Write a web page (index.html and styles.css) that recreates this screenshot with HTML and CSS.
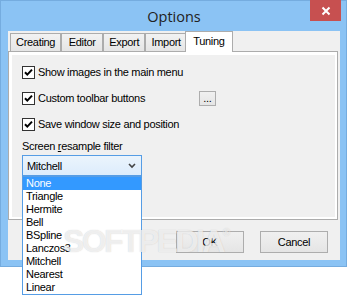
FILE: index.html
```html
<!DOCTYPE html>
<html lang="en">
<head>
  <meta charset="UTF-8" />
  <title>Options</title>
  <link rel="stylesheet" href="styles.css">
</head>
<body>

  <div class="window">
    <div class="titlebar">
      <span class="title">Options</span>
      <button class="close-button" aria-label="Close">
        <svg width="10" height="10" viewBox="0 0 10 10"><path d="M1.5 1.5 L8.5 8.5 M8.5 1.5 L1.5 8.5" stroke="#fff" stroke-width="2"/></svg>
      </button>
    </div>

    <div class="client">
      <!-- Abas -->
      <div class="tab-control">
        <div class="tab-strip">
          <span class="tab">Creating</span>
          <span class="tab">Editor</span>
          <span class="tab">Export</span>
          <span class="tab">Import</span>
          <span class="tab active">Tuning</span>
        </div>

        <div class="panel">
          <div class="page">
            <div class="check-list">
              <label class="check-row">
                <svg class="check" width="13" height="13" viewBox="0 0 13 13"><rect x="0.5" y="0.5" width="12" height="12" fill="#fff" stroke="#333"/><path d="M3 6.2 L5.3 8.6 L10 3.6" fill="none" stroke="#000" stroke-width="2"/></svg>
                <span>Show images in the main menu</span>
              </label>
              <label class="check-row">
                <svg class="check" width="13" height="13" viewBox="0 0 13 13"><rect x="0.5" y="0.5" width="12" height="12" fill="#fff" stroke="#333"/><path d="M3 6.2 L5.3 8.6 L10 3.6" fill="none" stroke="#000" stroke-width="2"/></svg>
                <span class="label-wide">Custom toolbar buttons</span>
                <button class="dots-button">...</button>
              </label>
              <label class="check-row">
                <svg class="check" width="13" height="13" viewBox="0 0 13 13"><rect x="0.5" y="0.5" width="12" height="12" fill="#fff" stroke="#333"/><path d="M3 6.2 L5.3 8.6 L10 3.6" fill="none" stroke="#000" stroke-width="2"/></svg>
                <span>Save window size and position</span>
              </label>
            </div>

            <div class="field-label">Screen <u>r</u>esample filter</div>

            <div class="combo">
              <span>Mitchell</span>
              <svg class="chevron" width="8" height="6" viewBox="0 0 8 6"><path d="M1 1 L4 4 L7 1" fill="none" stroke="#444" stroke-width="1.6"/></svg>

              <!-- Lista aberta -->
              <ul class="dropdown">
                <li class="selected">None</li>
                <li>Triangle</li>
                <li>Hermite</li>
                <li>Bell</li>
                <li>BSpline</li>
                <li>Lanczos3</li>
                <li>Mitchell</li>
                <li>Nearest</li>
                <li>Linear</li>
              </ul>
            </div>
          </div>
        </div>
      </div>

      <div class="buttons">
        <button class="dialog-button">OK</button>
        <button class="dialog-button">Cancel</button>
      </div>
    </div>

    <div class="watermark">SOFTPEDIA<sup>®</sup></div>
  </div>

</body>
</html>
```

FILE: styles.css
```css
* {
  box-sizing: border-box;
}

html,
body {
  min-height: 295px;
}

body {
  margin: 0;
  background-color: #fff;
  font-family: "Liberation Sans", Arial, sans-serif;
  font-size: 11px;
  letter-spacing: -0.3px;
  color: #000;
}

button {
  font-family: inherit;
  font-size: 11px;
  letter-spacing: -0.3px;
  color: #000;
  padding: 0;
}

.window {
  position: relative;
  width: 347px;
  height: 267px;
  background-color: #8bc3f4;
  border: 1px solid #75acdf;
  padding: 0 6px 6px 7px;
}

.titlebar {
  height: 30px;
  display: flex;
  justify-content: center;
  align-items: center;
}

.title {
  font-family: "Open Sans", sans-serif;
  font-size: 14.5px;
  letter-spacing: 0;
  color: #222;
}

.close-button {
  position: absolute;
  top: -1px;
  right: 5px;
  width: 31px;
  height: 21px;
  border: none;
  background-color: #c75050;
  display: flex;
  align-items: center;
  justify-content: center;
}

.client {
  height: 229px;
  background-color: #f0f0f0;
  display: flex;
  flex-direction: column;
}

.tab-control {
  width: 330px;
}

.tab-strip {
  display: flex;
  align-items: flex-end;
  height: 20px;
  padding-left: 2px;
  position: relative;
  z-index: 1;
}

.tab {
  height: 18px;
  min-width: 42px;
  line-height: 17px;
  padding: 0 5px;
  text-align: center;
  border: 1px solid #acacac;
  border-bottom: none;
  background: linear-gradient(#f2f2f2, #e5e5e5);
}

.tab.active {
  height: 21px;
  line-height: 18px;
  padding: 0 7px;
  margin: 0 -2px -1px -2px;
  background: #fff;
}

.panel {
  height: 169px;
  border: 1px solid #acacac;
  background-color: #fff;
  padding: 3px 2px 2px 3px;
}

.page {
  height: 100%;
  background-color: #f0f0f0;
  padding: 11px 10px;
}

.check-list {
  display: flex;
  flex-direction: column;
  gap: 13px;
}

.check-row {
  display: flex;
  align-items: center;
  height: 13px;
  line-height: 13px;
}

.check {
  flex: none;
  margin-right: 3px;
}

.label-wide {
  width: 161px;
}

.dots-button {
  width: 17px;
  height: 15px;
  line-height: 11px;
  border: 1px solid #adadad;
  background: linear-gradient(#f0f0f0, #e5e5e5);
}

.field-label {
  margin-top: 9px;
  line-height: 13px;
  margin-bottom: 2px;
}

.combo {
  position: relative;
  width: 120px;
  height: 21px;
  border: 1px solid #569de5;
  background: linear-gradient(#ebf4fc, #dcecfc);
  display: flex;
  align-items: center;
  justify-content: space-between;
  padding: 0 5px 0 4px;
}

.chevron {
  margin-top: 1px;
}

.dropdown {
  position: absolute;
  top: 20px;
  left: -1px;
  width: 120px;
  margin: 0;
  padding: 0;
  list-style: none;
  background-color: #fff;
  border: 1px solid #569de5;
  z-index: 3;
}

.dropdown li {
  height: 13px;
  line-height: 13px;
  padding-left: 3px;
}

.dropdown li.selected {
  background-color: #3399ff;
  color: #fff;
}

.buttons {
  display: flex;
  justify-content: flex-end;
  gap: 16px;
  margin-top: 11px;
  padding-right: 12px;
}

.dialog-button {
  width: 68px;
  height: 22px;
  border: 1px solid #adadad;
  background: linear-gradient(#f0f0f0, #e5e5e5);
}

/* marca d'agua por cima de tudo */
.watermark {
  position: absolute;
  left: 62px;
  top: 222px;
  font-size: 32px;
  font-weight: bold;
  letter-spacing: -2.6px;
  color: rgba(255, 255, 255, 0.7);
  text-shadow: 0 0 1px rgba(140, 140, 140, 0.45);
  z-index: 4;
  pointer-events: none;
}

.watermark sup {
  font-size: 10px;
  font-weight: normal;
  vertical-align: 16px;
  letter-spacing: 0;
}
```
